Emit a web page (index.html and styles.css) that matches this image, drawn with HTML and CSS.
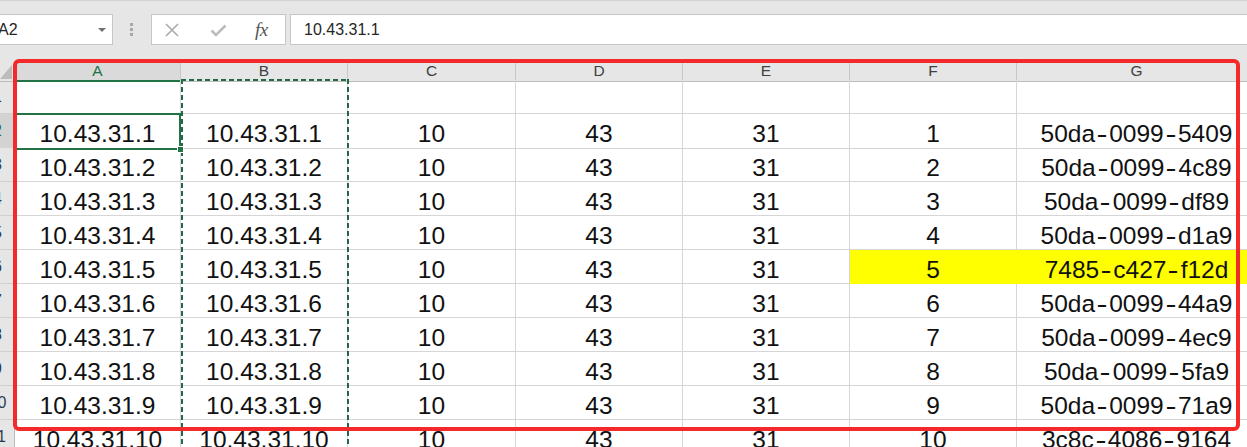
FILE: index.html
```html
<!DOCTYPE html>
<html>
<head>
<meta charset="utf-8">
<link rel="stylesheet" href="styles.css">
</head>
<body>
<div class="toolbar">
  <div class="namebox"><span class="nb-text">A2</span><span class="nb-arrow"></span></div>
  <div class="dots"><i></i><i></i><i></i></div>
  <div class="fnbox">
    <svg class="ic-x" width="14" height="14" viewBox="0 0 14 14"><path d="M1 1 L13 13 M13 1 L1 13" stroke="#ababab" stroke-width="1.6" fill="none"/></svg>
    <svg class="ic-ok" width="17" height="13" viewBox="0 0 17 13"><path d="M1.5 6.5 L6 11 L15.5 1.5" stroke="#bcbcbc" stroke-width="2.6" fill="none"/></svg>
    <span class="fx">fx</span>
  </div>
  <div class="formula">10.43.31.1</div>
</div>

<div class="sheet">
  <div class="row hdr">
    <div class="rh corner"><span class="tri"></span></div>
    <div class="ch cur">A</div><div class="ch">B</div><div class="ch">C</div><div class="ch">D</div><div class="ch">E</div><div class="ch">F</div><div class="ch">G</div>
  </div>
  <div class="row"><div class="rh">1</div><div class="c"></div><div class="c"></div><div class="c"></div><div class="c"></div><div class="c"></div><div class="c"></div><div class="c"></div></div>
  <div class="row"><div class="rh cur">2</div><div class="c sel">10.43.31.1</div><div class="c">10.43.31.1</div><div class="c">10</div><div class="c">43</div><div class="c">31</div><div class="c">1</div><div class="c">50da<span class="hy">-</span>0099<span class="hy">-</span>5409</div></div>
  <div class="row"><div class="rh">3</div><div class="c">10.43.31.2</div><div class="c">10.43.31.2</div><div class="c">10</div><div class="c">43</div><div class="c">31</div><div class="c">2</div><div class="c">50da<span class="hy">-</span>0099<span class="hy">-</span>4c89</div></div>
  <div class="row"><div class="rh">4</div><div class="c">10.43.31.3</div><div class="c">10.43.31.3</div><div class="c">10</div><div class="c">43</div><div class="c">31</div><div class="c">3</div><div class="c">50da<span class="hy">-</span>0099<span class="hy">-</span>df89</div></div>
  <div class="row"><div class="rh">5</div><div class="c">10.43.31.4</div><div class="c">10.43.31.4</div><div class="c">10</div><div class="c">43</div><div class="c">31</div><div class="c">4</div><div class="c">50da<span class="hy">-</span>0099<span class="hy">-</span>d1a9</div></div>
  <div class="row"><div class="rh">6</div><div class="c">10.43.31.5</div><div class="c">10.43.31.5</div><div class="c">10</div><div class="c">43</div><div class="c">31</div><div class="c hl">5</div><div class="c hl">7485<span class="hy">-</span>c427<span class="hy">-</span>f12d</div></div>
  <div class="row"><div class="rh">7</div><div class="c">10.43.31.6</div><div class="c">10.43.31.6</div><div class="c">10</div><div class="c">43</div><div class="c">31</div><div class="c">6</div><div class="c">50da<span class="hy">-</span>0099<span class="hy">-</span>44a9</div></div>
  <div class="row"><div class="rh">8</div><div class="c">10.43.31.7</div><div class="c">10.43.31.7</div><div class="c">10</div><div class="c">43</div><div class="c">31</div><div class="c">7</div><div class="c">50da<span class="hy">-</span>0099<span class="hy">-</span>4ec9</div></div>
  <div class="row"><div class="rh">9</div><div class="c">10.43.31.8</div><div class="c">10.43.31.8</div><div class="c">10</div><div class="c">43</div><div class="c">31</div><div class="c">8</div><div class="c">50da<span class="hy">-</span>0099<span class="hy">-</span>5fa9</div></div>
  <div class="row"><div class="rh">10</div><div class="c">10.43.31.9</div><div class="c">10.43.31.9</div><div class="c">10</div><div class="c">43</div><div class="c">31</div><div class="c">9</div><div class="c">50da<span class="hy">-</span>0099<span class="hy">-</span>71a9</div></div>
  <div class="row"><div class="rh">11</div><div class="c">10.43.31.10</div><div class="c">10.43.31.10</div><div class="c">10</div><div class="c">43</div><div class="c">31</div><div class="c">10</div><div class="c">3c8c<span class="hy">-</span>4086<span class="hy">-</span>9164</div></div>

  <div class="ants"></div>
  <div class="redbox"></div>
</div>
</body>
</html>
```

FILE: styles.css
```css
html, body {
  margin: 0;
  padding: 0;
}
body {
  width: 1247px;
  height: 447px;
  overflow: hidden;
  background: #ffffff;
  font-family: "Liberation Sans", Arial, sans-serif;
}

/* ---------- formula bar ---------- */
.toolbar {
  box-sizing: border-box;
  height: 62px;
  background: #e6e6e6;
  border-top: 1px solid #d2d2d2;
  display: flex;
  align-items: flex-start;
  padding-top: 13px;
}
.namebox {
  box-sizing: border-box;
  margin-left: -30px;
  width: 143px;
  height: 31px;
  background: #ffffff;
  border: 1px solid #c6c6c6;
  display: flex;
  align-items: center;
  padding-left: 27px;
  font-size: 16px;
  color: #262626;
}
.nb-arrow {
  margin-left: auto;
  margin-right: 6px;
  width: 0;
  height: 0;
  border-left: 4px solid transparent;
  border-right: 4px solid transparent;
  border-top: 4px solid #707070;
}
.dots {
  margin-left: 17px;
  margin-top: 9px;
  width: 4px;
  display: flex;
  flex-direction: column;
  gap: 2px;
}
.dots i {
  display: block;
  width: 3px;
  height: 3px;
  background: #a8a8a8;
}
.fnbox {
  box-sizing: border-box;
  margin-left: 17px;
  width: 135px;
  height: 31px;
  background: #ffffff;
  border: 1px solid #c6c6c6;
  display: flex;
  align-items: center;
  padding-left: 13px;
}
.ic-ok { margin-left: 31px; margin-top: 1px; }
.fx {
  margin-left: 28px;
  font-family: "Liberation Serif", "Times New Roman", serif;
  font-style: italic;
  font-size: 19px;
  color: #555555;
  letter-spacing: -0.5px;
}
.formula {
  box-sizing: border-box;
  flex: 1;
  margin-left: 4px;
  margin-right: -6px;
  height: 31px;
  background: #ffffff;
  border: 1px solid #c6c6c6;
  padding-left: 13px;
  display: flex;
  align-items: center;
  font-size: 16px;
  color: #262626;
}

/* ---------- sheet ---------- */
.sheet {
  position: relative;
}
.row {
  display: grid;
  grid-template-columns: 31px 166px 167px 168px 167px 167px 167px 240px;
  margin-left: -16px;
  height: 34px;
}
.row.hdr {
  height: 18px;
}
.rh {
  box-sizing: border-box;
  background: #e6e6e6;
  border-right: 1px solid #bdbdbd;
  border-bottom: 1px solid #d0d0d0;
  text-align: center;
  padding-right: 3px;
  font-size: 16px;
  line-height: 34px;
  color: #2f3a52;
  overflow: hidden;
}
.rh.cur {
  background: #d3d3d3;
  color: #217346;
}
.corner {
  position: relative;
  border-bottom: 1px solid #bdbdbd;
}
.tri {
  position: absolute;
  right: 2px;
  bottom: 2px;
  width: 12px;
  height: 14px;
  background: #bcbcbc;
  clip-path: polygon(100% 0, 100% 100%, 0 100%);
}
.ch {
  box-sizing: border-box;
  background: #e6e6e6;
  border-right: 1px solid #c8c8c8;
  border-bottom: 1px solid #bdbdbd;
  text-align: center;
  font-size: 15.5px;
  line-height: 18px;
  color: #404040;
}
.ch.cur {
  background: #dadada;
  color: #217346;
  border-bottom: 2px solid #217346;
}
.c {
  box-sizing: border-box;
  border-right: 1px solid #d6d6d6;
  border-bottom: 1px solid #d6d6d6;
  text-align: center;
  font-size: 24.5px;
  line-height: 28px;
  padding-top: 6px;
  color: #111111;
  white-space: nowrap;
  overflow: hidden;
}
.hy {
  display: inline-block;
  margin: 0 3px;
  transform: scaleX(1.35);
}
.c.hl {
  background: #ffff00;
  border-right-color: #ffff00;
  border-bottom-color: #ffff00;
}
.c.sel {
  position: relative;
  overflow: visible;
}
.c.sel::after {
  content: "";
  position: absolute;
  left: -1px;
  top: -1px;
  right: -1px;
  bottom: -2px;
  border: 2px solid #217346;
  z-index: 2;
}
.c.sel::before {
  content: "";
  position: absolute;
  right: -4px;
  bottom: -5px;
  width: 5px;
  height: 5px;
  background: #217346;
  border: 1px solid #ffffff;
  z-index: 3;
}

/* copy marquee around column B */
.ants {
  position: absolute;
  left: 181px;
  top: 17px;
  width: 168px;
  height: 420px;
  background:
    repeating-linear-gradient(to bottom, #1f6b47 0 5px, transparent 5px 8px) left top / 2px 100% no-repeat,
    repeating-linear-gradient(to bottom, #1f6b47 0 5px, transparent 5px 8px) right top / 2px 100% no-repeat,
    repeating-linear-gradient(to right, #1f6b47 0 5px, transparent 5px 8px) left top / 100% 2px no-repeat;
  z-index: 2;
  pointer-events: none;
}

/* red annotation rectangle */
.redbox {
  box-sizing: border-box;
  position: absolute;
  left: 13px;
  top: -3px;
  width: 1227px;
  height: 372px;
  border: 4px solid #f42a2a;
  border-radius: 6px;
  z-index: 4;
  pointer-events: none;
}
```
